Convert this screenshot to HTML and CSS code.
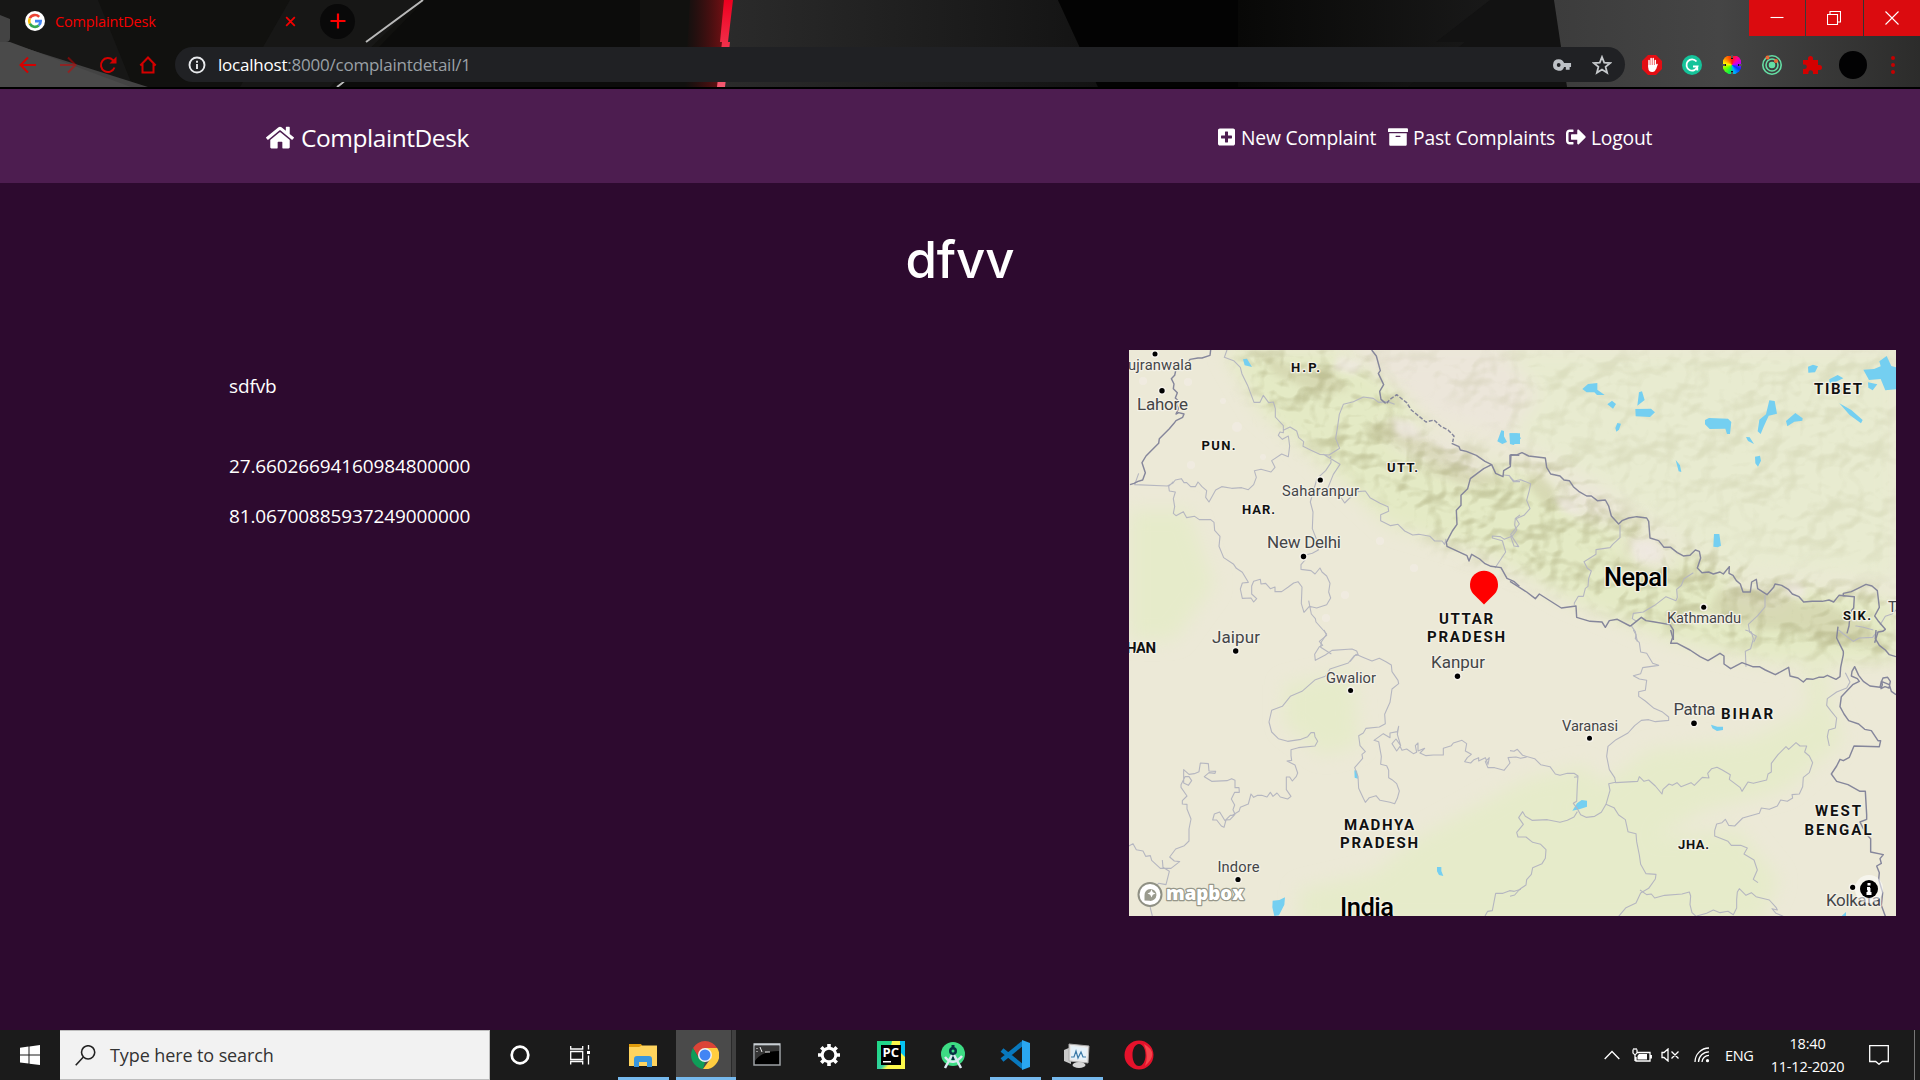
FILE: index.html
```html
<!DOCTYPE html>
<html lang="en">
<head>
<meta charset="utf-8">
<title>ComplaintDesk</title>
<link rel="stylesheet" href="styles.css">
</head>
<body>
<div class="screen">
  <header class="browser">
    <svg class="theme" viewBox="0 0 1920 87" preserveAspectRatio="none" aria-hidden="true">
      <defs>
        <linearGradient id="glow"><stop offset="0" stop-color="#510c0e" stop-opacity="0"/><stop offset="1" stop-color="#7c1014"/></linearGradient>
        <linearGradient id="steel"><stop offset="0" stop-color="#2b2b2b"/><stop offset="1" stop-color="#131313"/></linearGradient>
        <linearGradient id="right"><stop offset="0" stop-color="#080807"/><stop offset="1" stop-color="#1d1d1d"/></linearGradient>
        <linearGradient id="ash"><stop offset="0" stop-color="#3c3c3c"/><stop offset=".45" stop-color="#454545"/><stop offset="1" stop-color="#2c2c2b"/></linearGradient>
        <linearGradient id="beam" x2="0" y2="1"><stop offset="0" stop-color="#ee001f"/><stop offset="1" stop-color="#f45a72"/></linearGradient>
      </defs>
      <path fill="#11110f" d="M0 0h1920v87H0z"/>
      <path fill="#171716" d="M0 0h98l35 87H0zM290 0h130l-90 87h-90z"/>
      <path fill="#434343" d="M0 15l10 4v19q0 4-4 4l142 45H0z"/>
      <path fill="#4a4a4a" d="M0 42h10l121 45H0z"/>
      <path stroke="#b9b9b9" stroke-width="2" d="M423 0l-57 42M397 42l-60 45"/>
      <path fill="#0c0c0b" d="M425 0h215v87H340z"/>
      <path fill="url(#glow)" d="M690 0h37l-6 87h-36z"/>
      <path fill="url(#steel)" d="M730 0h328l40 87H720z"/>
      <path fill="#030303" d="M1058 0h180v87h-140z"/>
      <path fill="url(#right)" d="M1238 0h320v87h-320z"/>
      <path fill="#121212" d="M1490 0h64l10 42h-128zM1465 42h95l7 45H1408z"/>
      <path fill="url(#ash)" d="M1554 0h366v87h-353z"/>
      <path fill="url(#beam)" d="M724 0h9l-5 42h-8zM722 42h8l-5 45h-8z"/>
    </svg>
    <div class="tabstrip">
      <div class="tab">
        <svg class="favicon" viewBox="0 0 20 20"><circle cx="10" cy="10" r="10" fill="#fff"/><g fill="none" stroke-width="2.6"><path stroke="#ea4335" d="M4.8 7.3a5.8 5.8 0 0 1 9.4-1.5"/><path stroke="#fbbc05" d="M4.8 12.6a5.8 5.8 0 0 1 0-5.3"/><path stroke="#34a853" d="M13.8 14.4a5.8 5.8 0 0 1-9-1.8"/><path stroke="#4285f4" d="M10 10.1h5.7a5.8 5.8 0 0 1-1.9 4.3"/></g></svg>
        <span class="tab-title">ComplaintDesk</span>
        <svg class="tab-close" viewBox="0 0 12 12"><path d="M1.3 1.3l9.4 9.4M10.700 1.300l-9.400 9.400"/></svg>
      </div>
      <div class="new-tab"><svg viewBox="0 0 16 16"><path d="M8 .5v15M.5 8h15"/></svg></div>
      <div class="window-buttons">
        <span><svg viewBox="0 0 14 14"><path d="M.5 6.500h13"/></svg></span>
        <span><svg viewBox="0 0 14 14"><path d="M.5 3.500h10v10h-10zM3 3.500v-3h10.500v10.500h-3"/></svg></span>
        <span><svg viewBox="0 0 14 14"><path d="M.5 .5l13 13M13.500 .5l-13 13"/></svg></span>
      </div>
    </div>
    <div class="toolbar">
      <div class="nav-buttons">
        <svg viewBox="0 0 20 20"><path d="M18 10H3M10 2.500L2.500 10l7.500 7.500"/></svg>
        <svg class="dim" viewBox="0 0 20 20"><path d="M2 10h15M10 2.500l7.500 7.500-7.500 7.500"/></svg>
        <svg viewBox="0 0 20 20"><path d="M16.500 12.500a7 7 0 1 1-1.500-7.300l2 2"/><path class="solid" d="M18.500 1.500v7h-7z"/></svg>
        <svg viewBox="0 0 20 20"><path d="M4.500 9v8.500h11V9M2.300 10.500L10 2.500l7.700 8"/></svg>
      </div>
      <div class="omnibox">
        <svg class="info" viewBox="0 0 18 18"><circle cx="9" cy="9" r="7.500"/><path d="M9 8v5M9 4.700v2"/></svg>
        <span class="url"><b>localhost</b>:8000/complaintdetail/1</span>
        <svg class="key" viewBox="0 0 20 12"><path fill-rule="evenodd" d="M6 0a6 6 0 0 1 5.700 4H19v4h-1.500v3h-4V8h-1.800A6 6 0 1 1 6 0zm0 4a2 2 0 1 0 0 4 2 2 0 0 0 0-4z"/></svg>
        <svg class="star" viewBox="0 0 20 20"><path d="M10 2l2.200 5.600 6 .4-4.600 3.900 1.500 5.800L10 14.500l-5.100 3.200 1.500-5.800L1.800 8l6-.4z"/></svg>
      </div>
      <div class="extensions">
        <svg viewBox="0 0 20 20"><path fill="#e40d13" d="M6 0h8l6 6v8l-6 6H6l-6-6V6z"/><path fill="none" stroke="#fff" stroke-width="1.500" stroke-linecap="round" d="M7 12V5.500M9.100 10V3.500M11.200 10V3.500M13.300 11V5.500M15 9.500l-1.500 4"/><path fill="#fff" d="M6.300 10h7.800v3.500q-1 3.500-3.800 3.500-4 0-4-4z"/></svg>
        <svg viewBox="0 0 20 20"><circle cx="10" cy="10" r="10" fill="#15c39a"/><path fill="none" stroke="#fff" stroke-width="1.800" d="M14.500 6.500a5.600 5.600 0 1 0 1 5H11M15.300 11.500v4"/></svg>
        <span class="wheel"><svg viewBox="0 0 20 20"><path fill="none" stroke="#111" stroke-width="2" d="M10 0v4M10 16v4M0 10h4M16 10h4"/><path fill="none" stroke="#ddd" stroke-width=".7" d="M10 0v3M10 17v3M0 10h3M17 10h3"/></svg></span>
        <svg viewBox="0 0 20 20" fill="none" stroke="#65dfa5" stroke-width="1.600"><circle cx="10" cy="10" r="9.200"/><circle cx="10" cy="10" r="6"/><circle cx="10" cy="10" r="2.500" fill="#65dfa5"/><circle cx="5.500" cy="2.500" r="1.200" stroke="#f26532"/><circle cx="14" cy="6" r="1.200" stroke="#f26532"/></svg>
        <svg viewBox="0 0 20 20"><path fill="#d40000" d="M1 5h5V3.500a2.500 2.500 0 0 1 5 0V5h5v5h1.500a2.500 2.500 0 0 1 0 5H16v4h-5v-1.500a2.300 2.300 0 0 0-4.600 0V19H1v-5h1.500a2.300 2.300 0 0 0 0-4.600H1z"/></svg>
        <span class="avatar"></span>
        <svg viewBox="0 0 20 20" fill="#c50000"><circle cx="10" cy="3" r="2"/><circle cx="10" cy="10" r="2"/><circle cx="10" cy="17" r="2"/></svg>
      </div>
    </div>
  </header>

  <main class="page">
    <nav class="navbar">
      <a class="brand"><svg viewBox="0 0 576 512"><path d="M488 312.700V456c0 13.300-10.700 24-24 24H348c-6.600 0-12-5.400-12-12V356c0-6.600-5.400-12-12-12h-72c-6.600 0-12 5.400-12 12v112c0 6.600-5.400 12-12 12H112c-13.300 0-24-10.700-24-24V312.700c0-3.600 1.600-7 4.400-9.300l188-154.800c4.400-3.600 10.800-3.600 15.300 0l188 154.800c2.700 2.300 4.300 5.700 4.300 9.300zm83.600-60.900L488 182.900V44.400c0-6.600-5.400-12-12-12h-56c-6.600 0-12 5.400-12 12V117l-89.500-73.700c-17.700-14.600-43.300-14.600-61 0L4.400 251.800c-5.100 4.200-5.800 11.800-1.600 16.900l25.500 31c4.200 5.100 11.800 5.800 16.900 1.600l235.200-193.700c4.400-3.600 10.800-3.600 15.300 0l235.200 193.700c5.100 4.200 12.700 3.500 16.900-1.600l25.500-31c4.200-5.200 3.400-12.700-1.700-16.900z"/></svg><span>ComplaintDesk</span></a>
      <div class="links">
        <a class="l-new"><svg viewBox="0 0 448 512"><path d="M400 32H48C21.500 32 0 53.500 0 80v352c0 26.500 21.500 48 48 48h352c26.500 0 48-21.500 48-48V80c0-26.500-21.500-48-48-48zm-32 252c0 6.600-5.400 12-12 12h-92v92c0 6.600-5.400 12-12 12h-56c-6.600 0-12-5.400-12-12v-92H92c-6.600 0-12-5.400-12-12v-56c0-6.600 5.400-12 12-12h92v-92c0-6.600 5.400-12 12-12h56c6.600 0 12 5.400 12 12v92h92c6.600 0 12 5.400 12 12v56z"/></svg><span>New Complaint</span></a>
        <a class="l-past"><svg viewBox="0 0 512 512"><path d="M32 448c0 17.700 14.300 32 32 32h384c17.700 0 32-14.300 32-32V160H32v288zm160-212c0-6.600 5.400-12 12-12h104c6.600 0 12 5.400 12 12v8c0 6.600-5.400 12-12 12H204c-6.600 0-12-5.400-12-12v-8zM480 32H32C14.300 32 0 46.300 0 64v48c0 8.800 7.200 16 16 16h480c8.800 0 16-7.200 16-16V64c0-17.700-14.300-32-32-32z"/></svg><span>Past Complaints</span></a>
        <a class="l-out"><svg viewBox="0 0 512 512"><path d="M497 273L329 441c-15 15-41 4.500-41-17v-96H152c-13.300 0-24-10.700-24-24v-96c0-13.300 10.700-24 24-24h136V88c0-21.400 25.900-32 41-17l168 168c9.300 9.400 9.300 24.600 0 34zM192 436v-40c0-6.600-5.400-12-12-12H96c-17.700 0-32-14.300-32-32V160c0-17.700 14.300-32 32-32h84c6.600 0 12-5.400 12-12V76c0-6.600-5.400-12-12-12H96c-53 0-96 43-96 96v192c0 53 43 96 96 96h84c6.600 0 12-5.400 12-12z"/></svg><span>Logout</span></a>
      </div>
    </nav>
    <h1>dfvv</h1>
    <div class="detail">
      <div class="facts"><p class="body-text">sdfvb</p><p>27.66026694160984800000</p><p>81.06700885937249000000</p></div>
      <svg class="map" viewBox="0 0 767 566">
        <defs>
          <filter id="soft" x="-10%" y="-10%" width="120%" height="120%"><feGaussianBlur stdDeviation="9"/></filter>
          <filter id="blur3" x="-10%" y="-10%" width="120%" height="120%"><feGaussianBlur stdDeviation="3"/></filter>
          <filter id="relief" x="0" y="0" width="100%" height="100%" color-interpolation-filters="sRGB">
            <feTurbulence type="fractalNoise" baseFrequency=".026 .03" numOctaves="3" seed="11"/>
            <feDiffuseLighting surfaceScale="22" diffuseConstant="1" lighting-color="#fff"><feDistantLight azimuth="235" elevation="55"/></feDiffuseLighting>
            <feColorMatrix values="0 0 0 0 .68  0 0 0 0 .68  0 0 0 0 .5  -.75 0 0 0 .62"/>
          </filter>
          <mask id="hills">
            <g filter="url(#soft)">
              <path fill="#505050" d="M240 0H767V215L640 200 470 130 330 50z"/>
              <path fill="#ddd" d="M105 0H235L262 40 300 85 360 105 430 110 500 165 570 190 640 225 767 240V305L700 310 620 295 520 275 400 225 320 200 260 150 195 105 130 55z"/>
            </g>
          </mask>
        </defs>
        <rect width="767" height="566" fill="#ece9d7"/>
        <g filter="url(#soft)">
          <path fill="#e8ebd0" d="M330 0H767V230L600 220 480 140 340 60z"/>
          <path fill="#e4eac5" d="M95 0H240L300 80 400 125 500 175 610 230 767 250V312L640 312 540 290 440 250 360 205 260 175 200 120 130 60z"/>
          <path fill="#e6ebca" d="M0 160h60l25 75-40 55H0zM155 335l70-15 5 75-35 10-40-30zM395 430l60-15 20 20-60 40-90 40-100 25 60-50zM170 540l130-30 80-30 100 10 130-10 40 50-20 45H170zM380 480l60-20 80-60 100-10 80-40 15 40-60 50-80 20-110 60zM675 320l20-10 10 70-20 20z"/>
          <path fill="#ece6da" d="M215 0h160l35 45-30 40-80-20zM250 70l70 20 50 30-30 10-70-35zM420 130l50 10 20 35-40-10zM490 190l40 0 20 25-30 5zM600 235l60 10-10 15-50-10z"/>
        </g>
        <g fill="#cfcfa8" filter="url(#blur3)" opacity=".6">
          <path d="M130 2l40 18 30-2 20 22-30 4-45-20zM235 80l30-12 20 14 30 20 40 10-50-2-35-14zM300 110l60 15 40 14-70-6-40-14zM395 130l12-10 20 22-6 20zM480 205l50 18 40-3 20 14-60-4-40-12zM505 170l8-12-3 30-16 20zM590 240l70 5 50 35-80 0-50-20zM640 260l50-10 50 25 20 25-70-8z"/>
        </g>
        <rect width="767" height="566" filter="url(#relief)" mask="url(#hills)"/>
        <g fill="#f0e9e3" opacity=".75" filter="url(#blur3)"><path d="M210 5l25 8-10 12-22-6zM262 68l22 4 10 18-26-4zM425 145l20 6 8 14-20-4zM500 188l24 4 8 16-24 4zM655 232l18 2 4 14-20-2z"/></g>
        <g fill="#f2ece3" opacity=".8"><circle cx="14" cy="31" r="4"/><circle cx="59" cy="32" r="4"/><circle cx="94" cy="51" r="3"/><circle cx="108" cy="77" r="5"/><circle cx="134" cy="107" r="3"/><circle cx="62" cy="115" r="4"/><circle cx="251" cy="191" r="4"/><circle cx="285" cy="218" r="4"/><circle cx="216" cy="245" r="4"/><circle cx="197" cy="268" r="4"/></g>

        <g fill="#74cff1">
          <g transform="translate(-9 -10) scale(.33333)"><path d="M369 58l12-2 15 25-22-5zM1132 304l12-33 8 2v16l9 17-14 6zM1168 280l32 0v32l-30 0z"/></g>
          <g transform="translate(381 -10) scale(.33333)"><path d="M0 280h22l11 15-22 20-11-3zM217 147l17-15 28-3 0 20 22 16-23 0-8-8-23 0zM292 193l14-11 12 10-9 14zM382 197l5-40 9-3 8 26zM376 207l47-1 12 11-15 14-43-2zM316 264l6-15 11 2-6 18-8 6zM585 240l12-6 57 2 10 10-4 36-9 0-5-16-47 1-14-14zM778 181l16 2 7 38-25 6-15 33-9 22-9-8 5-35 20-16zM828 243l28-24 22 16-1 7-24 3-21 14zM708 291l11 1 13 20-18-9zM735 350l15-3 3 15-9 18-8-10zM497 360l13 16 4 20-8-2zM612 582l16 0 5 35-10 5-13-2zM894 80l15-6 15 5-9 18-20 1zM958 118l25-13 17 10-17 8-17 8-8-3zM1060 89l32-2 20-8-4-15 22-16 14 30 14 4v66l-32 3-14-34-35 3zM1074 127l28 6-14 18-13-8zM988 190l36 20 34 30-5 10-34-25z"/></g>
          <g transform="translate(-9 280) scale(.33333)"><path d="M703 421l8 1 3 24-10-3zM951 711l13 0 0 12 6 15-13-3-6-11zM458 812l20-2 17-8-2 22-16 32-14 2-6-26z"/></g>
          <g transform="translate(381 280) scale(.33333)"><path d="M603 284l19 6 17 0 0 10-18 3-14-8zM187 542l14-22 14-10 16 2 0 18-23 8zM995 858l13-12v12z"/></g>
        </g>

        <g class="state">
          <g transform="translate(-9 -10) scale(.33333)">
            <path d="M321 30l-8 22 28 10 20 20 5 20 18 37 18 48 18 0 10-21 16 22 14-2 6 20 0 25 24 26 0 14 20-10 20 12 6 20 15 12-2 14 24 12 26 12 28 2 32-20-12-30 5-30 6-42 12-30 30-8 30-14 30 4 16 12 28-2 20 8M490 260l0 18-10-2-5 10 12 12 18-10 4 30-4 32-20-8-30 20 10 20-12 14-30-8-20 4 6 20-8 22-16 15-20-6-30 2-30-5-18 10-12 22-8 14-10-14 3-20-14-12-12-14-8 14-14 0-12-12-8 0-8-12-18 4-8 10-16 8-98-4 12-34M160 425l-14 14 2 14 18 3-6 20 4 24-4 20 8 7 22-12 10 18 24-4 14 10 34 0 10 8 2 24 16 18-3 30 14 34 30 20 8 12 18 12 18 30-18 2-6 18 6 28 26-1 8 12 9-10-15-14 0-24 6-14 20-6 2 14 14-2 14 16 14-5 0 14 20 0 20-14 16-12 13-4 12 16-2 50 8 26 16-18 22 5 30-10 12-20-6-18 4-26-10-22-14-12-6-12-15 18-12-10-30-4 0-14 12-14 4-16 18-4 18-10-4-28-14-36 2-50-8-30 10-36 10-34 26-24 16-24-1-20M610 343l50 30-20 30-16 40 18 14 20 14 12 18 18-18 20-16 24-2 14 20 30 17 24 10 2 14-24 10 0 18 30 15 22-4 20 20 24 12 18-2 34 6 14 14 22 0 8 10 4-16M1200 525l-14 10-2 20 6 15-13 18-24 10-12-8-24-2 0 6 30 8 10 34-32 48M1150 405l18 2 12 18 20 0M566 782l8 40 12 14 2 10 32 36-16 24-2 16 32 20"/>
          </g>
          <g transform="translate(381 -10) scale(.33333)">
            <path d="M0 411l12 12 20-4 30 12-4 20-8 30 10 25-18 20-24 10 10 16-26 32 24 36-14-2-10-28M330 555l0 38-22 20-8 10-42 6 0 14-36 22 10 20 12 8-8 22-2 24-8 6-6 24-15 0-12 20 0 5M550 698l-28 18-8 20-14 12 2 24-4 10-30-12-34 26-34 20-30 4-3 16 12 8M362 855l14 20 6 30M765 765l0 36-22 26-28 26 4 24 20 12-8 18M1090 870l-30-8-20-4-4 0M1110 855l16-26 20-7 12-12"/>
          </g>
          <g transform="translate(-9 280) scale(.33333)">
            <path d="M612 0l8 16-22 18 10 12-10 4-14 23 2 18 30-16 20-14 60-4 14 6 5 12-12 2-18 22-55 18-14 22-30 10-40 35-35 15-24 30-32 12-8 35 8 30 20 20 28 8 40-6 20-8 10-12 10 0 2 12 8 14-8 14-50 5-22 6 0 18 2 14-14 2 24 12 8 24-4 10-12 14-8-12-10 0 0 38 14 20-10 8-22-6-10-12-12 10-8-12-10 14-16-5-12 0-12 6-8-10-8 30-24 10-4 12-20 12-6 0-16 16-16-26-16 6-5 18 12 0 14 18 8 4 6-22 12-1 15-16-6-14 5-14-10-18 10-20 14 0-1-14-12 0 0-22-10-5-14 6-46 2-22-14 14-12 18 2 2-6-20-1-2-22-24-2-4 26-14 6-16 2-16-14 0 40 14 7 10-14-8-12-12 0-12 24 0 8 18 26-14 14 0 10 14 1 0 14 12 30-6 30 0 36-14 14-26 10-18 24 14 12 16 2-26 20-32 0-26-24-4-14-14 2-8-16-20-4-10-18-14 8-10-5M127 690l2 22 19 12-10 40-22-4-10 10-14 18-1 46 6 24M690 95l18-22 24 10 24 10 22-8 20 10 16 10 2 20 18 26 2 10-20 16-6 40-16 36 2 28-18 10-40 4-8 14-14 8 4 30 16 18-10 8 2 12-24 28 10 26 2 36 14 30 6 12 12-14 20-6 12 14 30 6 14 4 8-16 6-22-8-22-14-12-10-6 0-22-6-14-18-4 2-24-8-44-14-4 28-20 20 12 0-14 22-4 4-16-4 24 10 34-14-20-12 14 14 22 10-14 6 12 14-4 20 14 10-4-4-20 8-8 0 24 20-8-14 14 18 8 22-2 30 0 0-20 24-8 6-8 26-8 14 10-4 22 18 10-12 10-8 12 18 4 10-10 14-6 0 10 20-10 8 20 4-20-12 12 8 18 20 0 28 8 18-22-6-16 24-2 14 4 18-4M1095 858l8-14 14-2 10-52 22 0 20-8 14 2 20-6"/>
          </g>
          <g transform="translate(381 280) scale(.33333)">
            <path d="M370 0l8 14-2 12 12 12 4 28 18 4 18 30 18 6-48 7-6 18-22 6 18 10 22 4-4 30-20 4 0 14 20 14 26 22 24 10 20 16 0 10-40 4-20-6-22 2-20 16-20 22-36 20-24 20-4 30 8 40 16 24 3 15 66-4 5-14 14 14 14-4 20 18 20 24 3-14 18-16 10 4 14-8 12 12 30-12 10 8 24-24 20 2-4-14 12-14 16-4 16 8 24 14-3 14 32 24 6 12 18-28 16 4 40-10 4-18 10-6 0-26 20-26 24-24 8 8 22-20 12 10 20 0-6 18 14 12 10 20-10 30-18 14-2 28-10 22-22 2 2 10-16 10-20-4-10 18-24 10-24-4-6 16-50 14-24 24-18-2-10-18-10 10-16 4-6 20 0 16 40 16 10 12 28 0 20 8-10 18 30 18 10 30-12 28 14 10M316 457l-20 4 4 20-12 42 24 10 14 22 20 14 8 36 24 6 2 24 8 40 4 28 16 28 30 2-2 14-20 28-24 14-14 30-30 14-22 26-4 8M390 780l20 14 14-2 10 12 30-8 52-4 22-6 4 12-2 26 6 24 20 18M202 440l-10 2M202 545l-10 16-20 10-22 6-38-8-46 2-20-12-8-14-12 18 14 20-20 24 4 14 24 0 20 16 24 6 16 16-2 26-10 16-28 12-4 20-14 16-2 16-18 12-16 18-14 4M288 523l-14 24-20 12-26 3-16-8-10-18-12-16 10-6 2-50 2-26-12-8-20 0-22 6-14-4-16-22-28-6-18-18-36-10-16-18-10 6-12-2M986 0l14 12 30 22 18-10 40-2 12-16M706 0l18 6 6 20-8 30-16 8 2 46M1006 128l14 28-10 18-30 12-28 20-2 20 12 16 18 22-4 30-20 6-4 20 6 28M560 858l30-8 20-10 20 8 24-4 16 10 10-20 0-26 2-22 6-10 20 20 16-8 14 12 40 10 20 22 4 8-16-4 12 14 20 8 16 14"/>
          </g>
        </g>
        <g class="nation">
          <g transform="translate(-9 -10) scale(.33333)">
            <path d="M272 30l-2 16-24 8-12 0-24 4-16 26-26 4-4 18-10 10 8 16-2 14 12 12-6 16 10 10-6 10 6 10-8 18 8-4 16 4-4 10-20 10-6 8-14 16-30 30-2 14-18 18-20 20-12 20 10 30-8 22-14 4-12 6-12 4"/>
            <path stroke-dasharray="12 5" d="M800 190l10-12 20-14 30 24 14 22 44 36 24-6 22 20 20 10 18 18-4 18"/>
            <path d="M755 30l14 18 12 44-6 8 16 34-12 20 4 24 14 12M995 310l22 10 4 10 18 4 30 12 26 18 20 10-24 12-40 30-8 30-20 20 0 30-14 15 2 42-14 20-18 34 2 12 60 28 6 16 8-20 24 14 16 14 18 8 30 4 18 32 22 10 15 14M1115 374l12 26 22 10 2-18 20-12 2-36 25 2"/>
          </g>
          <g transform="translate(381 -10) scale(.33333)">
            <path d="M0 374v-28l22-2 14-6 20 10 50 6 4 28 12 20 28 6 12 12 16 2 12 18 16 14 24 14 14 0 18 14 24-2 10 18 8 30 22 24 10-10 20-8 24-4 30 4 6 10 4 50 26 8 16 20 20 0 20 16 18 10 20-2 16-16 12 4 4 20-10 30 14 14 20-2 14 6 20-6 10 6 18-22-1 20 12 6 10 16 12 10 8 24 22 0 4-30 14-8 4 28 28 18 20-22 4-10 20 4 20 12 12 14 20 8 14 16 26-2 30 0 20-4 14 6 16-20 46 4-2 34-10 12-4 42-6 22M1000 770l0-10 24-5 20-10 24-12 18 5 16 14 6 50-14 26 10 14 22 26-8 6-14 2-10 32M0 724l50 32 26 20 12-14 66 42 44-6 2 34 40 12 36 2 10 16 12-20 24-4 38 20 4-2 30-24 14 10 26 4 46 8 10 16 0 30"/>
          </g>
          <g transform="translate(381 280) scale(.33333)">
            <path d="M482 0l6 22-6 18 20 0 38 20 30 20 24 12 36-22 12 8 0 24 20 14 34-18 32 12 20 0 18 10 30 14 40-22 4 26 24 6 16 12 10-10 18 2 18-6 14 0 12-6 26 12 12-8 2-28 8-38 0-10-20-40 4-34M1098 0l-2 26 12 20 18 14 12 14 20 6M1158 194l-14-10-6-20-24-10-4 18-30-4-20-14-14-18-12-26-8 14-2 14 18 8 6 8-20 10-34 36-4 30 12 22 14 20 30 10 18 16 20 4 20 30 8 0-4 18-76-2-14 34-18 10-10-4-10 20-16 24 16 22 34 10 36 20 16 0 4 70 0 14-20 8 10 20 12 20 10 10 0 40 38 8-10 12 4 14-14 8 8 20-2 20 12 40-4 38 14 38M1115 154l4-10 14-2 8 12-4 20-12-4-12 6 4-12z"/>
          </g>
        </g>

        <g class="dots"><circle cx="26" cy="4" r="2.500"/><circle cx="33" cy="40.700" r="2.700"/><circle cx="191.300" cy="130" r="2.600"/><circle cx="174.500" cy="206.500" r="2.700"/><circle cx="574.700" cy="257.300" r="2.500"/><circle cx="106.700" cy="301" r="2.700"/><circle cx="221.600" cy="340.500" r="2.500"/><circle cx="328.500" cy="326.300" r="2.700"/><circle cx="460.500" cy="388.300" r="2.500"/><circle cx="565" cy="373.300" r="2.800"/><circle cx="109" cy="529.500" r="2.600"/><circle cx="723.700" cy="537.300" r="2.600"/></g>
        <g class="city">
          <text x="-1" y="19.500" textLength="64">ujranwala</text>
          <text class="big" x="8" y="59.500" textLength="51">Lahore</text>
          <text x="153" y="146" textLength="77">Saharanpur</text>
          <text class="big" x="138" y="197.700" textLength="74">New Delhi</text>
          <text x="538" y="273" textLength="74">Kathmandu</text>
          <text class="big" x="83" y="292.500" textLength="48">Jaipur</text>
          <text x="197" y="333" textLength="50">Gwalior</text>
          <text class="big" x="302" y="318" textLength="54">Kanpur</text>
          <text x="433" y="381" textLength="56">Varanasi</text>
          <text class="big" x="544.500" y="364.700" textLength="42">Patna</text>
          <text x="88.500" y="522" textLength="42">Indore</text>
          <text class="big" x="697" y="556.300" textLength="55">Kolkata</text>
          <text x="759" y="262">T</text>
        </g>
        <g class="region">
          <text x="162" y="21.500" textLength="29">H.P.</text>
          <text x="72.500" y="100" textLength="34">PUN.</text>
          <text x="258" y="121.500" textLength="31">UTT.</text>
          <text x="113" y="163.500" textLength="33">HAR.</text>
          <text x="714" y="269.500" textLength="28">SIK.</text>
          <text x="549" y="498.500" textLength="31">JHA.</text>
          <text class="large" x="685" y="43.500" textLength="48">TIBET</text>
          <text class="large" x="310" y="273.500" textLength="54">UTTAR</text>
          <text class="large" x="298" y="291.700" textLength="78">PRADESH</text>
          <text class="large" x="-3" y="303.300" textLength="30">HAN</text>
          <text class="large" x="592" y="369.300" textLength="52">BIHAR</text>
          <text class="large" x="215" y="479.700" textLength="70">MADHYA</text>
          <text class="large" x="211" y="498" textLength="78">PRADESH</text>
          <text class="large" x="686" y="466.300" textLength="46">WEST</text>
          <text class="large" x="675.500" y="484.600" textLength="67">BENGAL</text>
        </g>
        <g class="country"><text x="475" y="235.500" textLength="64">Nepal</text><text x="211" y="565.500" textLength="54">India</text></g>
        <path fill="red" d="M355 254.500l-10.800-10.800a14 14 0 1 1 21.600 0z"/>
        <g class="logo"><circle cx="21" cy="544.500" r="11.500" fill="#fff" stroke="#8f9084" stroke-width="2"/><path fill="#9a9b8e" d="M15.500 550.500v-5a6 6 0 1 1 5 5.300z"/><path fill="#fff" d="M22.500 539.500l1.300 2.700 2.700 1.300-2.700 1.300-1.300 2.700-1.300-2.700-2.700-1.300 2.700-1.300z"/><text x="37" y="549.500" textLength="78" lengthAdjust="spacingAndGlyphs">mapbox</text></g>
        <circle cx="740" cy="539" r="14" fill="#fff" fill-opacity=".55"/><circle cx="740" cy="539" r="9"/><path stroke="#fff" stroke-width="3" d="M740 538v6M740 533v2.500M738 538.500h3M737.500 543.500h5"/>
      </svg>
    </div>
  </main>

  <footer class="taskbar">
    <div class="start"><svg viewBox="0 0 20 20"><path fill="#fff" d="M0 2.800l8.500-1.200v8H0zM9.500 1.500L20 0v9.600H9.500zM0 10.600h8.500v8L0 17.500zM9.500 10.600H20V20L9.500 18.700z"/></svg></div>
    <div class="search"><svg viewBox="0 0 20 20"><circle cx="12.500" cy="7" r="6.300"/><path d="M8 11.500L.7 19.300"/></svg><span>Type here to search</span></div>
    <div class="slot"><svg viewBox="0 0 20 20" class="i20"><circle cx="10" cy="10" r="8.300" fill="none" stroke="#fff" stroke-width="2.700"/></svg></div>
    <div class="slot view"><svg viewBox="0 0 20 20" class="i20"><path fill="none" stroke="#fff" stroke-width="1.300" d="M.7 1v3h12V1M.7 6.500h12v8H.7zM.7 19.500v-3h12v3M18.500 0v4.500M18.500 10.500v9"/><path fill="#fff" d="M17 6h3v3h-3z"/></svg></div>
    <div class="apps">
      <div class="app running"><svg viewBox="0 0 28 28"><path fill="#e09c0d" d="M0 3h12l2 3v4H0z"/><path fill="#ffd45e" d="M0 6h10l3-1.500h15V25H0z"/><path fill="#3a96dd" d="M5 26V18q0-3 3-3h12q3 0 3 3v8h-5v-5h-8v5z"/></svg></div>
      <div class="app active"><svg viewBox="0 0 28 28"><path fill="#db4437" d="M2 7A14 14 0 0 1 26.200 7H14l-6 10z"/><path fill="#0f9d58" d="M2 7l6 10.500 6 3.500-2 7A14 14 0 0 1 2 7z"/><path fill="#ffcd40" d="M14 7h12.200A14 14 0 0 1 12 28l8-11z"/><circle cx="14" cy="14" r="7" fill="#f1f1f1"/><circle cx="14" cy="14" r="5.500" fill="#4285f4"/></svg></div>
      <div class="app"><svg viewBox="0 0 28 28"><path fill="#000" stroke="#9da1a5" stroke-width="1.500" d="M1 3h26v21H1z"/><path fill="#c8ced3" d="M1 2.500h26v2H1z"/><path fill="#353535" d="M2 5h24v5Q8 10 2 20z"/><path stroke="#eee" d="M4 7v1M4 10v1M7 6l2 5M12 11h5"/></svg></div>
      <div class="app"><svg viewBox="0 0 28 28" fill="none" stroke="#fff"><circle cx="14" cy="14" r="6.800" stroke-width="3"/><path stroke-width="3.600" d="M14 7V3M14 21v4M7 14H3M21 14h4M9 9L6.300 6.300M19 19l2.700 2.700M19 9l2.700-2.700M9 19l-2.700 2.700"/></svg></div>
      <div class="app"><svg viewBox="0 0 28 28"><defs><linearGradient id="pc" x2="1" y2="1"><stop offset=".2" stop-color="#21d789"/><stop offset=".55" stop-color="#35cfa0"/><stop offset=".65" stop-color="#fcf84a"/></linearGradient></defs><path fill="url(#pc)" d="M0 0h28v28H0z"/><path fill="#07c3f2" d="M20 0h8v16l-4-4z"/><path fill="#fcf84a" d="M15 0h8v5h-9z"/><path fill="#000" d="M4 4h20v20H4z"/><text x="5.500" y="15.500" textLength="16.500" lengthAdjust="spacingAndGlyphs" class="pc">PC</text><path fill="#fff" d="M6 20h8v1.500H6z"/></svg></div>
      <div class="app"><svg viewBox="0 0 28 28"><circle cx="14" cy="13" r="12" fill="#3ddc84"/><circle cx="14" cy="10" r="4" fill="#073042"/><path stroke="#073042" stroke-width="3" d="M14 4v15"/><circle cx="14" cy="10" r="1.500" fill="#3ddc84"/><path fill="none" stroke="#dceaf2" stroke-width="2.500" d="M13 14L6 27M15 14l7 13M6 16q8 10 17-1"/></svg></div>
      <div class="app running"><svg class="wide" viewBox="0 0 30 30"><path fill="none" stroke="#0878bd" stroke-width="4.500" stroke-linejoin="round" d="M2 20L23 3M2 10l21 17"/><path fill="#2aa7f0" d="M22 0l8 3v24l-8 3z"/></svg></div>
      <div class="app running"><svg viewBox="0 0 28 28"><path fill="#c9c9c9" d="M1 9l7-3v17l-7-3z"/><path fill="#e9e9e9" stroke="#aaa" d="M6 3l20 2-1 17-19-2z"/><path fill="#e6f2fa" d="M8 5l16 2-1 12-15-1z"/><path fill="none" stroke="#3b7aa8" stroke-width="1.200" d="M8 16h3l2-6 2 7 3-6 2 5h3"/><ellipse cx="16" cy="24" rx="6.500" ry="3" fill="#d6d6d6"/></svg></div>
      <div class="app"><svg class="wide" viewBox="0 0 30 30"><path fill="#e5122b" fill-rule="evenodd" d="M15 .5a14.500 14.500 0 1 1 0 29 14.500 14.500 0 0 1 0-29zm0 3.500c-4 0-6.500 5-6.500 11S11 26 15 26s6.500-5 6.500-11S19 4 15 4z"/><path fill="#ff6560" opacity=".6" d="M20 4q16 9 1 22 4-11-1-22z"/></svg></div>
    </div>
    <div class="tray">
      <svg class="t1" viewBox="0 0 16 10"><path d="M.7 9L8 1.500 15.300 9"/></svg>
      <svg class="t2" viewBox="0 0 20 14"><path d="M5 4.500h13v8.500H4V9M19.300 7v3.500M1 1.500v3.500q2 3 4 0V1.500M2 0v2M4 0v2M3 6v7"/><path fill="#fff" stroke="none" d="M7 6h8v5.500H5.500V8z"/></svg>
      <svg class="t3" viewBox="0 0 19 14"><path d="M1 4.500h2L7 1v12L3 9.500H1zM10.500 3.500l7 7M17.500 3.500l-7 7"/></svg>
      <svg class="t4" viewBox="0 0 16 16"><path d="M1 15A14 14 0 0 1 15 1M4.500 15A10.500 10.500 0 0 1 15 4.800M8 15a7 7 0 0 1 7-6.600"/><circle cx="13.500" cy="13.700" r="1.600" fill="#fff" stroke="none"/></svg>
      <span class="lang">ENG</span>
      <span class="clock"><span>18:40</span><span class="date">11-12-2020</span></span>
      <svg class="t5" viewBox="0 0 20 20"><path d="M.7 .7h18.600v15.800h-6L10 19.300 6.700 16.500h-6z"/></svg>
      <span class="peek"></span>
    </div>
  </footer>
</div>
</body>
</html>
```
FILE: styles.css
```css
* { box-sizing: border-box; }
body { margin: 0; background: #2d0a2f; font-family: "Open Sans", "Noto Sans", sans-serif; }
svg { display: block; flex: none; }
.screen { width: 1920px; height: 1080px; display: grid; grid-template-rows: 89px 941px 50px; overflow: hidden; }

/* Browser chrome */
.browser { position: relative; border-bottom: 2px solid #000; display: grid; grid-template-rows: 42px 45px; }
.theme { position: absolute; inset: 0; width: 1920px; height: 87px; }
.tabstrip, .toolbar { position: relative; display: flex; align-items: center; }
.tabstrip { padding-left: 25px; }
.tab { display: flex; align-items: center; width: 295px; }
.favicon { width: 20px; height: 20px; }
.tab-title { margin-left: 10px; color: #f60000; font-size: 14.500px; letter-spacing: -.15px; white-space: nowrap; width: 225px; }
.tab-close { width: 11px; height: 11px; margin-left: 5px; stroke: #f60000; stroke-width: 1.900; }
.new-tab { width: 35px; height: 35px; border-radius: 50%; background: #090909; display: grid; place-items: center; }
.new-tab svg { width: 16px; height: 16px; stroke: red; stroke-width: 2.200; }
.window-buttons { margin-left: auto; align-self: start; display: flex; gap: 1px; }
.window-buttons span { width: 56px; height: 36px; background: #db0b0f; display: grid; place-items: center; }
.window-buttons span:nth-child(2) { width: 57px; }
.window-buttons svg { width: 14px; height: 14px; fill: none; stroke: #fff; stroke-width: 1.100; margin-right: 1px; }
.nav-buttons { display: flex; gap: 20px; padding-left: 18px; width: 175px; }
.nav-buttons svg { width: 20px; height: 20px; fill: none; stroke: #d40000; stroke-width: 2; }
.nav-buttons .solid { fill: #d40000; stroke: none; }
.nav-buttons .dim { opacity: .5; }
.omnibox { width: 1450px; height: 35px; border-radius: 18px; background: #202124; display: flex; align-items: center; padding: 0 13px 0 13px; }
.info { width: 18px; height: 18px; fill: none; stroke: #e8eaed; stroke-width: 1.900; }
.url { margin-left: 12px; margin-right: auto; color: #9aa0a6; font-size: 17px; letter-spacing: -.22px; white-space: nowrap; }
.url b { color: #fff; font-weight: 400; }
.key { width: 19px; height: 12px; fill: #bdc1c6; margin-right: 20px; }
.star { width: 20px; height: 20px; fill: none; stroke: #c6c9cc; stroke-width: 1.800; }
.extensions { display: flex; align-items: center; gap: 20px; padding-left: 17px; }
.extensions svg { width: 20px; height: 20px; }
.wheel { width: 20px; height: 20px; background: conic-gradient(#ff1e00, #ff0095, #b800ff, #0037ff, #00a9ff, #0ef04c, #6aff00, #fff500, #ff7b00, #ff1e00) center / 18px 18px no-repeat; clip-path: circle(50%); }
.avatar { width: 28px; height: 28px; margin: 0 -4px 0 -3px; border-radius: 50%; background: #020203; }

/* Complaint page */
.page { background: #2d0a2f; color: #fff; }
.navbar { height: 94px; background: #4d1d50; display: flex; align-items: center; padding: 2px 266px 0; }
.navbar a { display: flex; align-items: center; white-space: nowrap; }
.navbar svg { fill: #fff; }
.brand { font-size: 24.500px; letter-spacing: -.45px; }
.brand svg { width: 28px; height: 25px; margin-right: 7px; }
.links { margin-left: auto; display: flex; font-size: 19.300px; letter-spacing: -.2px; }
.links svg { height: 20px; margin-right: 6px; }
.links .l-past svg, .links .l-out svg { width: 20px; margin-right: 5px; }
.l-new svg { width: 17px; }
.l-new { width: 170px; } .l-past { width: 178px; } .l-out { width: 88px; }
h1 { margin: 0; padding-top: 46px; height: 167px; text-align: center; font: 500 51px/61px Inter, sans-serif; letter-spacing: -.1px; }
.detail { display: grid; grid-template-columns: 1129px 767px; }
.facts { padding: 21px 0 0 229px; font-size: 19px; line-height: 30px; letter-spacing: -.12px; }
.facts p { margin: 0 0 20px; }
.facts .body-text { margin-bottom: 50px; }

.map { width: 767px; height: 566px; overflow: hidden; }
.state, .nation { fill: none; stroke-linejoin: round; }
.state { stroke: #b5b6c0; stroke-width: 3.300; }
.nation { stroke: #85869b; stroke-width: 4.300; }
.map text { font-family: Roboto, sans-serif; paint-order: stroke; stroke: #f3f1e6; stroke-width: 2.500px; stroke-linejoin: round; }
.city text { fill: #444548; font-size: 14.700px; }
.city .big { font-size: 17px; }
.dots circle { stroke: #f5f2ea; stroke-width: 3; paint-order: stroke; }
.region text { fill: #111; font-size: 13px; font-weight: 700; }
.region .large { font-size: 15px; }
.country text { fill: #000; font-size: 25.500px; font-weight: 500; }
.map .logo text { font: 800 20px "Open Sans", sans-serif; fill: #fff; stroke: #96978a; stroke-width: 2.500px; }

/* Taskbar */
.taskbar { background: #1b1b1b; color: #fff; display: flex; align-items: stretch; }
.start { width: 60px; padding: 15px 20px; }
.start svg, .i20 { width: 20px; height: 20px; }
.search { width: 430px; background: #f2f2f2; border: 1px solid #bdbdbd; border-left: 0; color: #333; display: flex; align-items: center; padding-left: 15px; font-size: 18px; letter-spacing: -.1px; white-space: nowrap; }
.search svg { width: 21px; height: 21px; fill: none; stroke: #222; stroke-width: 1.500; margin-right: 14px; }
.slot { width: 60px; padding: 15px 20px; }
.apps { display: grid; grid-template-columns: repeat(9, 62.100px); margin-left: 2px; }
.app { display: grid; place-items: center; }
.app svg { width: 28px; height: 28px; margin-right: 1px; }
.app .wide { width: 30px; height: 30px; }
.app.running { background: linear-gradient(#76b9ed, #76b9ed) center bottom / 51px 3px no-repeat; }
.app.active { background: linear-gradient(#76b9ed, #76b9ed) 2px bottom / 60px 3px no-repeat, linear-gradient(90deg, transparent 2px, #4a4a4a 2px 57px, #2a2a2a 57px 58px, #404040 58px); }
.pc { fill: #fff; font: 700 12px "Open Sans", sans-serif; }
.tray { margin-left: auto; display: flex; align-items: center; }
.tray svg { fill: none; stroke: #fff; stroke-width: 1.300; }
.t1 { width: 16px; height: 10px; margin-right: 12px; }
.t2 { width: 20px; height: 14px; margin-right: 9px; }
.t3 { width: 19px; height: 14px; margin-right: 14px; }
.t4 { width: 16px; height: 16px; margin-right: 15px; }
.lang { width: 44px; font-size: 14.500px; letter-spacing: -.3px; }
.clock { width: 77px; display: grid; text-align: center; line-height: 23px; font-size: 14.500px; letter-spacing: -.2px; white-space: nowrap; }
.t5 { width: 20px; height: 20px; margin-left: 23px; }
.peek { width: 6px; height: 50px; border-left: 1px solid #777; margin-left: 25px; }
```
